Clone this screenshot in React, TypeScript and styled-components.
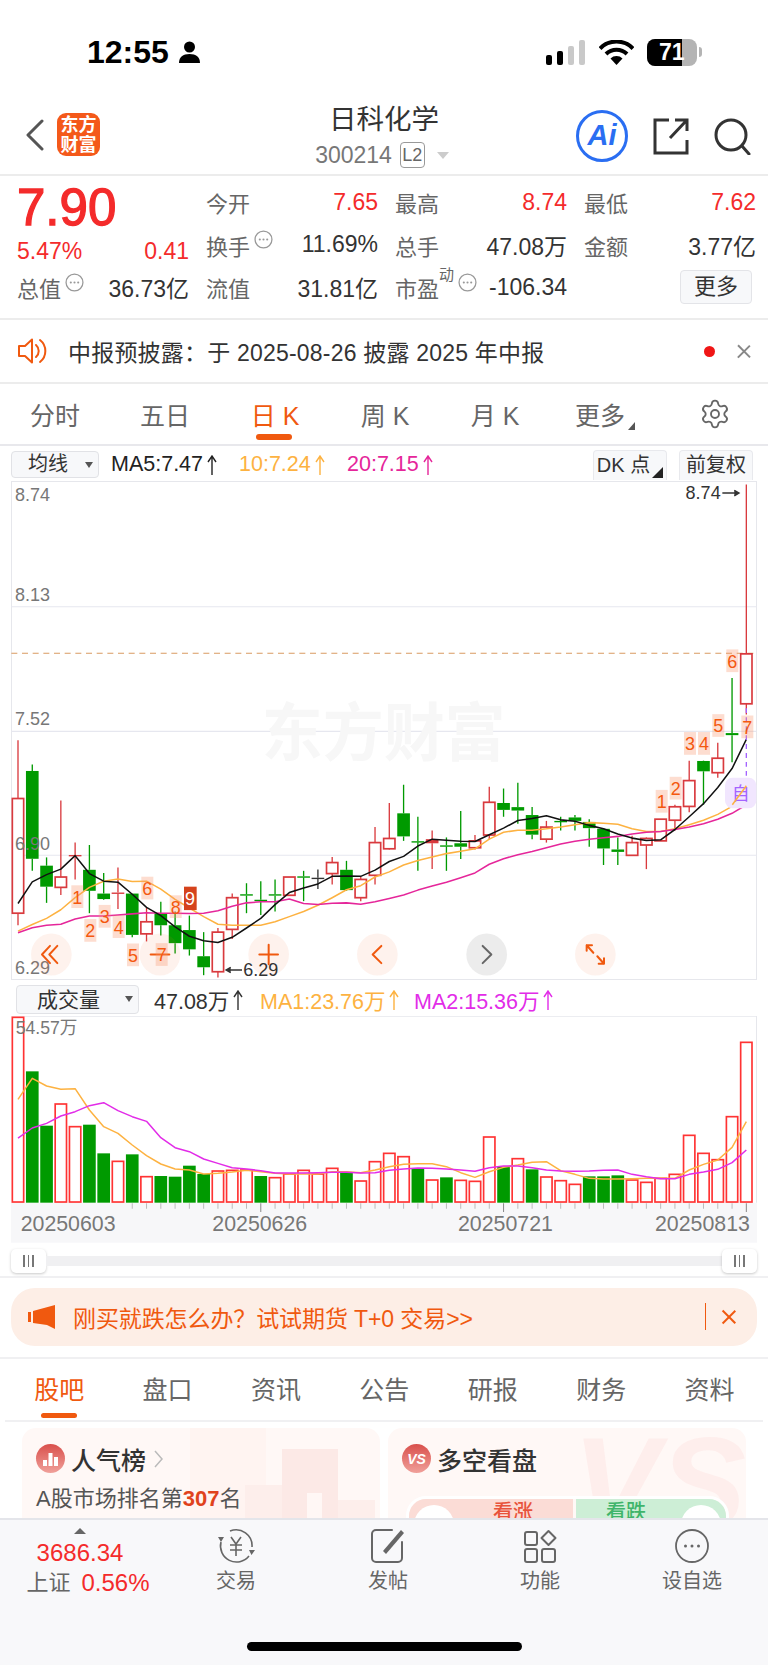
import styled, { createGlobalStyle } from "styled-components";
import { Settings } from "lucide-react";

const GlobalStyle = createGlobalStyle`
  html, body {
    margin: 0;
    padding: 0;
    background: #fff;
    font-family: "Liberation Sans", "Noto Sans CJK SC", sans-serif;
  }
  * { box-sizing: border-box; }
`;

const RED = "#f42b2b";
const ORANGE = "#f0590f";

// chart data is [colour, hi, top, bottom, lo] in chart units (3 units a pixel)
type Candle = [string, number, number, number, number];
const candles: Candle[] = [
  ["r", 843, 1012, 1345, 1380], ["g", 913, 932, 1187, 1222], ["g", 1183, 1207, 1268, 1315], ["r", 1018, 1240, 1270, 1292],
  ["r", 1140, 1176, 1180, 1247], ["g", 1147, 1219, 1280, 1345], ["g", 1228, 1288, 1304, 1306], ["r", 1212, 1285, 1288, 1333],
  ["g", 1288, 1288, 1408, 1415], ["r", 1330, 1370, 1405, 1427], ["g", 1312, 1345, 1380, 1410], ["g", 1340, 1380, 1432, 1462],
  ["g", 1352, 1394, 1450, 1468], ["g", 1400, 1470, 1502, 1525], ["r", 1388, 1400, 1515, 1532], ["r", 1288, 1300, 1392, 1420],
  ["g", 1258, 1290, 1294, 1345], ["g", 1252, 1306, 1309, 1350], ["g", 1247, 1290, 1294, 1340], ["r", 1240, 1240, 1293, 1293],
  ["g", 1222, 1238, 1241, 1310], ["k", 1218, 1242, 1245, 1275], ["r", 1182, 1198, 1230, 1262], ["g", 1193, 1219, 1278, 1280],
  ["r", 1240, 1247, 1300, 1310], ["r", 1095, 1140, 1235, 1262], ["r", 1025, 1128, 1158, 1160], ["g", 972, 1055, 1122, 1135],
  ["g", 1065, 1136, 1139, 1222], ["r", 1105, 1130, 1142, 1217], ["g", 1125, 1148, 1151, 1222], ["g", 1048, 1142, 1152, 1188],
  ["r", 1118, 1135, 1155, 1160], ["r", 978, 1023, 1118, 1130], ["g", 983, 1025, 1045, 1065], ["g", 966, 1037, 1047, 1085],
  ["g", 1037, 1060, 1117, 1130], ["r", 1077, 1095, 1130, 1140], ["g", 1065, 1077, 1080, 1105], ["g", 1060, 1067, 1077, 1105],
  ["g", 1072, 1080, 1098, 1152], ["g", 1098, 1100, 1157, 1205], ["g", 1125, 1160, 1167, 1205], ["r", 1120, 1140, 1177, 1177],
  ["r", 1125, 1128, 1147, 1217], ["r", 1072, 1072, 1135, 1135], ["r", 1030, 1036, 1075, 1105], ["r", 902, 960, 1035, 1052],
  ["g", 902, 903, 933, 1030], ["r", 850, 895, 937, 952], ["g", 662, 822, 828, 907], ["r", 100, 592, 737, 768],
];

const ma5 = [1317, 1254, 1233, 1217, 1178, 1230, 1252, 1255, 1290, 1328, 1352, 1385, 1412, 1425, 1430, 1415, 1388, 1360, 1320, 1285, 1272, 1260, 1238, 1237, 1238, 1220, 1195, 1180, 1150, 1130, 1133, 1136, 1137, 1117, 1098, 1076, 1070, 1062, 1074, 1078, 1090, 1100, 1115, 1127, 1134, 1132, 1102, 1065, 1027, 980, 925, 840];
const ma10 = [1397, 1378, 1360, 1335, 1300, 1270, 1252, 1246, 1253, 1252, 1275, 1305, 1330, 1355, 1377, 1380, 1380, 1380, 1370, 1355, 1340, 1322, 1300, 1277, 1265, 1240, 1225, 1205, 1192, 1182, 1172, 1165, 1158, 1130, 1110, 1104, 1104, 1100, 1095, 1088, 1082, 1084, 1087, 1100, 1108, 1108, 1100, 1088, 1075, 1058, 1035, 975];
const ma20 = [1402, 1387, 1380, 1377, 1362, 1353, 1353, 1350, 1347, 1344, 1345, 1345, 1346, 1345, 1338, 1325, 1315, 1312, 1312, 1304, 1317, 1320, 1316, 1315, 1319, 1312, 1302, 1292, 1278, 1266, 1255, 1242, 1228, 1203, 1187, 1175, 1166, 1155, 1144, 1136, 1130, 1126, 1122, 1115, 1110, 1108, 1102, 1095, 1085, 1072, 1055, 1030];

const volTops = [82, 244, 407, 342, 410, 404, 490, 514, 493, 560, 558, 560, 527, 552, 543, 541, 540, 558, 563, 552, 541, 552, 535, 548, 573, 515, 490, 500, 535, 570, 562, 571, 574, 441, 530, 506, 538, 561, 572, 583, 559, 559, 556, 570, 577, 565, 553, 436, 490, 509, 380, 157];
const volGreen = [1, 2, 5, 6, 8, 10, 11, 12, 13, 17, 23, 28, 30, 34, 36, 40, 41, 42];
const volMa1 = [328, 265, 288, 298, 296, 360, 410, 430, 465, 497, 522, 537, 540, 552, 550, 546, 541, 545, 550, 552, 552, 552, 545, 545, 548, 540, 530, 523, 521, 521, 530, 548, 562, 545, 532, 525, 517, 515, 542, 553, 565, 567, 567, 566, 565, 565, 565, 540, 523, 510, 472, 395];
const volMa2 = [444, 414, 400, 378, 365, 347, 338, 362, 380, 394, 443, 473, 485, 507, 520, 533, 537, 542, 549, 549, 549, 548, 547, 547, 549, 548, 541, 537, 534, 535, 537, 540, 544, 533, 528, 528, 533, 540, 543, 544, 543, 541, 540, 553, 560, 566, 566, 553, 546, 538, 518, 480];

const xAt = (i: number) => 54 + (i * (2239 - 54)) / 51;
const points = (ys: number[]) => ys.map((y, i) => `${xAt(i).toFixed(1)},${y}`).join(" ");

const candleColor: Record<string, string> = { r: "#d93a3e", g: "#009a00", k: "#333333" };

const tdMarks: [string, number, number][] = [
  ["1", 232, 1297], ["2", 271, 1395], ["3", 314, 1354], ["4", 356, 1384], ["5", 399, 1466], ["6", 442, 1272], ["7", 485, 1465], ["8", 527, 1326],
  ["1", 1985, 1020], ["2", 2027, 982], ["3", 2070, 852], ["4", 2112, 852], ["5", 2155, 800], ["6", 2197, 612], ["7", 2242, 804],
];

function KLineChart() {
  return (
    <ChartSvg viewBox="33 90 2238 1449" preserveAspectRatio="none" $height={499}>
      <rect x="34.500" y="91.500" width="2235" height="1446" fill="#fff" stroke="#e6e7ec" strokeWidth="3" />
      {[455, 817, 1177].map((y) => (
        <line key={y} x1="34" x2="2270" y1={y} y2={y} stroke="#e6e7ef" strokeWidth="3" />
      ))}
      <line x1="34" x2="2268" y1="590" y2="590" stroke="#d99a62" strokeWidth="3" strokeDasharray="18 14" />
      <SvgLabel x="785" y="885" $size={183} $color="#f7f7f7" $bold>东方财富</SvgLabel>

      {candles.map(([c, hi, top, bottom, lo], i) => {
        const x = xAt(i);
        const color = candleColor[c];
        const doji = bottom - top < 15;
        return (
          <g key={i}>
            <line x1={x} x2={x} y1={hi} y2={top} stroke={color} strokeWidth="4" />
            <line x1={x} x2={x} y1={bottom} y2={lo} stroke={color} strokeWidth="4" />
            {c === "r" && !doji ? (
              <rect x={x - 17} y={top} width="34" height={bottom - top} fill="#fff" stroke={color} strokeWidth="5" />
            ) : (
              <rect x={x - 19} y={top} width="38" height={Math.max(bottom - top, 4)} fill={color} />
            )}
          </g>
        );
      })}

      <polyline points={points(ma10)} fill="none" stroke="#fdb241" strokeWidth="4.500" strokeLinejoin="round" />
      <polyline points={points(ma20)} fill="none" stroke="#e5269a" strokeWidth="4.500" strokeLinejoin="round" />
      <polyline points={points(ma5)} fill="none" stroke="#111" strokeWidth="4.500" strokeLinejoin="round" />

      {[["8.74", 148], ["8.13", 438], ["7.52", 800], ["6.90", 1163], ["6.29", 1523]].map(([t, y]) => (
        <SvgLabel key={t} x="45" y={y} $size={54} $color="#777">{t}</SvgLabel>
      ))}

      <line x1="2239" x2="2239" y1="750" y2="950" stroke="#a463ff" strokeWidth="4" strokeDasharray="14 12" />

      <circle cx="154" cy="1465" r="61" fill="rgba(245,110,50,0.09)" />
      <circle cx="480" cy="1465" r="61" fill="rgba(245,110,50,0.09)" />
      <circle cx="806" cy="1465" r="61" fill="rgba(245,110,50,0.09)" />
      <circle cx="1132" cy="1465" r="61" fill="rgba(245,110,50,0.09)" />
      <circle cx="1460" cy="1465" r="61" fill="#ececec" />
      <circle cx="1786" cy="1465" r="61" fill="rgba(245,110,50,0.09)" />

      <g fill="none" stroke={ORANGE} strokeWidth="6" strokeLinecap="round" strokeLinejoin="round">
        <path d="M150 1440 L126 1465 L150 1490 M172 1440 L148 1465 L172 1490" />
        <line x1="452" x2="508" y1="1465" y2="1465" />
        <path d="M778 1465 H834 M806 1437 V1493" />
        <path d="M1144 1440 L1118 1465 L1144 1490" />
        <path d="M1760 1438 L1780 1460 M1760 1438 H1776 M1760 1438 V1454 M1812 1492 L1792 1470 M1812 1492 H1796 M1812 1492 V1476" />
      </g>
      <path d="M1448 1440 L1474 1465 L1448 1490" fill="none" stroke="#666" strokeWidth="6" strokeLinecap="round" strokeLinejoin="round" />

      {tdMarks.map(([n, x, y], i) => (
        <g key={i}>
          <rect x={x - 18} y={y - 33} width="36" height="66" fill="rgba(250,150,110,0.32)" />
          <SvgLabel x={x} y={y + 20} $size={54} $color="#f4580f" $center>{n}</SvgLabel>
        </g>
      ))}
      <rect x="552" y="1268" width="38" height="68" fill="#d5431c" />
      <SvgLabel x="570" y="1322" $size={54} $color="#fff" $center>9</SvgLabel>

      <rect x="2175" y="952" width="94" height="88" rx="22" fill="#f1e6fe" />
      <SvgLabel x="2222" y="1015" $size={54} $color="#a463ff" $center>自</SvgLabel>
      <polyline points="2197,1030 2239,975" fill="none" stroke="#fdb241" strokeWidth="4.500" />

      <SvgLabel x="2162" y="143" $size={54} $color="#333" $end>8.74</SvgLabel>
      <path d="M2167 125 H2215 M2203 117 L2217 125 L2203 133" fill="#333" stroke="#333" strokeWidth="4" />
      <path d="M680 1510 H726 M692 1502 L678 1510 L692 1518" fill="#333" stroke="#333" strokeWidth="4" />
      <SvgLabel x="730" y="1528" $size={54} $color="#333">6.29</SvgLabel>
    </ChartSvg>
  );
}

function VolumeChart() {
  return (
    <ChartSvg viewBox="33 78 2238 680" preserveAspectRatio="none" $height={226.7}>
      <rect x="33" y="78" width="2238" height="560" fill="#fff" />
      <rect x="33" y="638" width="2238" height="120" fill="#f7f7f9" />
      <line x1="34" x2="2270" y1="79" y2="79" stroke="#e6e7ec" strokeWidth="3" />
      <line x1="2269.500" x2="2269.500" y1="78" y2="638" stroke="#e6e7ec" strokeWidth="3" />
      {volTops.map((top, i) => {
        const x = xAt(i);
        const major = i === 17 || i === 34 || i === 51;
        return (
          <g key={i}>
            {volGreen.includes(i) ? (
              <rect x={x - 19} y={top} width="38" height={638 - top} fill="#009a00" />
            ) : (
              <rect x={x - 17} y={top} width="34" height={636 - top} fill="#fff" stroke="#ff3333" strokeWidth="5" />
            )}
            {i > 7 && <line x1={x} x2={x} y1="640" y2={major ? 666 : 656} stroke={major ? "#888" : "#bbb"} strokeWidth="3" />}
          </g>
        );
      })}
      <polyline points={points(volMa1)} fill="none" stroke="#fdb241" strokeWidth="4.500" strokeLinejoin="round" />
      <polyline points={points(volMa2)} fill="none" stroke="#e22ce8" strokeWidth="4.500" strokeLinejoin="round" />
      <SvgLabel x="47" y="131" $size={53} $color="#777">54.57万</SvgLabel>
      {[["20250603", 62], ["20250626", 637], ["20250721", 1374], ["20250813", 1965]].map(([t, x]) => (
        <SvgLabel key={t} x={x} y="724" $size={64} $color="#777">{t}</SvgLabel>
      ))}
    </ChartSvg>
  );
}

const InfoDot = () => (
  <InfoSvg viewBox="0 0 18 18">
    <circle cx="9" cy="9" r="8" fill="none" stroke="#999" strokeWidth="1.200" />
    <circle cx="5.500" cy="9" r="1" fill="#999" />
    <circle cx="9" cy="9" r="1" fill="#999" />
    <circle cx="12.500" cy="9" r="1" fill="#999" />
  </InfoSvg>
);

const UpMark = () => (
  <UpSvg viewBox="0 0 10 20">
    <path d="M5 20 V2 M1 7 L5 1 L9 7" fill="none" stroke="currentColor" strokeWidth="1.400" />
  </UpSvg>
);

const GripBars = () => (
  <Handle>
    <i />
    <i />
    <i />
  </Handle>
);

export default function App() {
  return (
    <Page>
      <GlobalStyle />

      <StatusBar>
        <Time>12:55</Time>
        <svg width="21" height="22" viewBox="0 0 21 22" style={{ marginLeft: 9 }}>
          <circle cx="10.500" cy="6" r="5.500" fill="#000" />
          <path d="M0 22c0-6 4-9 10.500-9S21 16 21 22z" fill="#000" />
        </svg>
        <StatusRight>
          <svg width="39" height="25" viewBox="0 0 39 25">
            <rect x="0" y="15" width="6" height="10" rx="2" fill="#000" />
            <rect x="11" y="11" width="6" height="14" rx="2" fill="#000" />
            <rect x="22" y="6" width="6" height="19" rx="2" fill="#c9c9c9" />
            <rect x="33" y="0" width="6" height="25" rx="2" fill="#c9c9c9" />
          </svg>
          <svg width="35" height="25" viewBox="0 0 35 25" style={{ marginLeft: 14 }}>
            <path d="M1 8.500a23 23 0 0 1 33 0" fill="none" stroke="#000" strokeWidth="4" />
            <path d="M7 14a15 15 0 0 1 21 0" fill="none" stroke="#000" strokeWidth="4" />
            <path d="M17.500 25l-6-6.500a8.500 8.500 0 0 1 12 0z" fill="#000" />
          </svg>
          <Battery>
            <BatteryFill>71</BatteryFill>
          </Battery>
          <BatteryTip />
        </StatusRight>
      </StatusBar>

      <Header>
        <HeaderLeft>
          <svg width="20" height="32" viewBox="0 0 20 32">
            <path d="M17 2 L3 16 L17 30" fill="none" stroke="#555" strokeWidth="3" strokeLinecap="round" strokeLinejoin="round" />
          </svg>
          <Logo>
            东方
            <br />
            财富
          </Logo>
        </HeaderLeft>
        <HeaderCenter>
          <Title>日科化学</Title>
          <CodeRow>
            300214
            <LevelBadge>L2</LevelBadge>
            <DownArrow />
          </CodeRow>
        </HeaderCenter>
        <HeaderRight>
          <AiBadge>Ai</AiBadge>
          <svg width="36" height="37" viewBox="0 0 36 37" style={{ marginLeft: 25 }}>
            <path d="M16 2 H2 V35 H34 V22 M17 20 L33 3 M22 2 H34 V13" fill="none" stroke="#333" strokeWidth="3" />
          </svg>
          <svg width="37" height="37" viewBox="0 0 37 37" style={{ marginLeft: 25 }}>
            <circle cx="17" cy="17" r="15" fill="none" stroke="#333" strokeWidth="3" />
            <path d="M28 28 L35 36" stroke="#333" strokeWidth="3" strokeLinecap="round" />
          </svg>
        </HeaderRight>
      </Header>

      <Quote>
        <Price>7.90</Price>
        <Cell><Label>今开</Label><Value $red>7.65</Value></Cell>
        <Cell><Label>最高</Label><Value $red>8.74</Value></Cell>
        <Cell><Label>最低</Label><Value $red>7.62</Value></Cell>

        <ChangeCell><Value $red>5.47%</Value><Value $red>0.41</Value></ChangeCell>
        <Cell><Label>换手<InfoDot /></Label><Value>11.69%</Value></Cell>
        <Cell><Label>总手</Label><Value>47.08万</Value></Cell>
        <Cell><Label>金额</Label><Value>3.77亿</Value></Cell>

        <Cell><Label>总值<InfoDot /></Label><Value>36.73亿</Value></Cell>
        <Cell><Label>流值</Label><Value>31.81亿</Value></Cell>
        <Cell><Label>市盈<Sup>动</Sup><InfoDot /></Label><Value>-106.34</Value></Cell>
        <MoreCell><MoreButton>更多</MoreButton></MoreCell>
      </Quote>

      <Notice>
        <svg width="30" height="26" viewBox="0 0 30 26">
          <path d="M1 8 H7 L14 1.500 V24.500 L7 18 H1 Z" fill="none" stroke={ORANGE} strokeWidth="2" strokeLinejoin="round" />
          <path d="M18 7 A8 8 0 0 1 18 19 M22 2 A14 14 0 0 1 22 24" fill="none" stroke={ORANGE} strokeWidth="2" strokeLinecap="round" />
        </svg>
        <NoticeText>中报预披露：于 2025-08-26 披露 2025 年中报</NoticeText>
        <RedDot />
        <CloseMark $color="#888" $size={14} />
      </Notice>

      <PeriodTabs>
        <PeriodTab>分时</PeriodTab>
        <PeriodTab>五日</PeriodTab>
        <PeriodTab $active>日 K</PeriodTab>
        <PeriodTab>周 K</PeriodTab>
        <PeriodTab>月 K</PeriodTab>
        <PeriodTab>更多<CornerArrow /></PeriodTab>
        <PeriodTab><Settings size={32} strokeWidth={1.400} color="#666" /></PeriodTab>
      </PeriodTabs>

      <ChartBar>
        <SelectBox>均线<SelectArrow /></SelectBox>
        <MaText $color="#222" $left={12} $width={128}>MA5:7.47<UpMark /></MaText>
        <MaText $color="#fdb241" $width={108}>10:7.24<UpMark /></MaText>
        <MaText $color="#e5269a" $width={90}>20:7.15<UpMark /></MaText>
        <RightTools>
          <ToolButton>DK 点<CornerArrow $dark /></ToolButton>
          <ToolButton>前复权</ToolButton>
        </RightTools>
      </ChartBar>
      <ChartWrap>
        <KLineChart />
      </ChartWrap>

      <VolumeBar>
        <SelectBox $wide>成交量<SelectArrow /></SelectBox>
        <MaText $color="#333" $left={15} $width={106}>47.08万<UpMark /></MaText>
        <MaText $color="#fdb241" $width={154}>MA1:23.76万<UpMark /></MaText>
        <MaText $color="#e22ce8" $width={150}>MA2:15.36万<UpMark /></MaText>
      </VolumeBar>
      <ChartWrap>
        <VolumeChart />
      </ChartWrap>

      <Slider>
        <GripBars />
        <SliderTrack />
        <GripBars />
      </Slider>

      <BannerWrap>
        <Banner>
          <svg width="28" height="24" viewBox="0 0 28 24">
            <rect x="0" y="7" width="3" height="10" fill={ORANGE} />
            <path d="M5 6 L27 0 V24 L19 20 L5 18 Z" fill={ORANGE} />
          </svg>
          <BannerText>刚买就跌怎么办？试试期货 T+0 交易&gt;&gt;</BannerText>
          <BannerDivider />
          <CloseMark $color={ORANGE} $size={15} />
        </Banner>
      </BannerWrap>

      <InfoTabs>
        <InfoTab $active>股吧</InfoTab>
        <InfoTab>盘口</InfoTab>
        <InfoTab>资讯</InfoTab>
        <InfoTab>公告</InfoTab>
        <InfoTab>研报</InfoTab>
        <InfoTab>财务</InfoTab>
        <InfoTab>资料</InfoTab>
      </InfoTabs>

      <Cards>
        <Card>
          <CardArt viewBox="0 0 358 110" aria-hidden="true">
            <rect x="168" y="0" width="76" height="110" fill="#fff1ee" opacity="0.6" />
            <rect x="223" y="57" width="37" height="53" fill="#fdeeeb" />
            <rect x="260" y="21" width="56" height="89" fill="#fce9e6" />
            <rect x="316" y="72" width="37" height="38" fill="#fdeeeb" />
            <rect x="285" y="65" width="15" height="45" fill="#fff7f5" />
          </CardArt>
          <CardHead>
            <CardIcon>
              <svg width="17" height="15" viewBox="0 0 17 15">
                <path d="M1 15V9h4v6zM6.500 15V2h4v13zM12 15V6h4v9z" fill="#fff" />
              </svg>
            </CardIcon>
            <CardTitle>人气榜</CardTitle>
            <svg width="9" height="18" viewBox="0 0 9 18" style={{ marginLeft: 8 }}>
              <path d="M1 1 L8 9 L1 17" fill="none" stroke="#bbb" strokeWidth="1.500" />
            </svg>
          </CardHead>
          <CardLine>A股市场排名第<strong>307</strong>名</CardLine>
        </Card>
        <Card>
          <CardWatermark aria-hidden="true">VS</CardWatermark>
          <CardHead>
            <CardIcon>VS</CardIcon>
            <CardTitle>多空看盘</CardTitle>
          </CardHead>
          <VotePill>
            <VoteUp>看涨</VoteUp>
            <VoteDown>看跌</VoteDown>
          </VotePill>
        </Card>
      </Cards>

      <BottomBar>
        <IndexBlock>
          <UpTriangle />
          <IndexValue>3686.34</IndexValue>
          <IndexRow>
            <span>上证</span>
            <IndexChange>0.56%</IndexChange>
          </IndexRow>
        </IndexBlock>
        <NavItem>
          <svg width="38" height="36" viewBox="0 0 38 36" fill="none" stroke="#666" strokeWidth="1.600">
            <path d="M13 3 A16 16 0 0 1 35 19" />
            <path d="M32 28 A16 16 0 0 1 4 14" />
            <path d="M1 9 L7 9 L4 14 Z M32 22 L38 22 L34.500 27 Z" fill="#666" stroke="none" />
            <path d="M14 9 L19 16 L24 9 M13 17 H25 M13 22 H25 M19 16 V28" />
          </svg>
          <NavLabel>交易</NavLabel>
        </NavItem>
        <NavItem>
          <svg width="36" height="36" viewBox="0 0 36 36" fill="none" stroke="#666" strokeWidth="2">
            <path d="M22 2 H6 a4 4 0 0 0-4 4 V30 a4 4 0 0 0 4 4 H28 a4 4 0 0 0 4-4 V14" strokeLinecap="round" />
            <path d="M13 23 L31 2 L34 5 L16 26 Z" fill="#666" stroke="none" />
          </svg>
          <NavLabel>发帖</NavLabel>
        </NavItem>
        <NavItem>
          <svg width="36" height="36" viewBox="0 0 36 36" fill="none" stroke="#666" strokeWidth="2">
            <rect x="3" y="4" width="12" height="13" rx="2" />
            <rect x="3" y="21" width="12" height="13" rx="2" />
            <rect x="20" y="21" width="13" height="13" rx="2" />
            <path d="M26.500 3 L33.500 10 L26.500 17 L19.500 10 Z" strokeLinejoin="round" />
          </svg>
          <NavLabel>功能</NavLabel>
        </NavItem>
        <NavItem>
          <svg width="36" height="36" viewBox="0 0 36 36">
            <circle cx="18" cy="18" r="16" fill="none" stroke="#666" strokeWidth="1.800" />
            <circle cx="11.500" cy="18" r="1.500" fill="#666" />
            <circle cx="18" cy="18" r="1.500" fill="#666" />
            <circle cx="24.500" cy="18" r="1.500" fill="#666" />
          </svg>
          <NavLabel>设自选</NavLabel>
        </NavItem>
        <HomeIndicator />
      </BottomBar>
    </Page>
  );
}

const Page = styled.div`
  position: relative;
  width: 768px;
  height: 1665px;
  overflow: hidden;
  background: #fff;
  color: #333;
`;

const StatusBar = styled.div`
  height: 96px;
  padding: 36px 0 28px 87px;
  display: flex;
  align-items: center;
`;

const Time = styled.div`
  font-size: 32px;
  line-height: 32px;
  font-weight: 700;
  color: #000;
  width: 83px;
`;

const StatusRight = styled.div`
  margin-left: 346px;
  display: flex;
  align-items: center;
`;

const Battery = styled.div`
  margin-left: 13px;
  width: 50px;
  height: 27px;
  border-radius: 8px;
  background: #b4b4b4;
  overflow: hidden;
`;

const BatteryFill = styled.div`
  width: 35px;
  height: 27px;
  background: #000;
  color: #fff;
  font-size: 23px;
  line-height: 27px;
  font-weight: 700;
  padding-left: 12px;
  white-space: nowrap;
`;

const BatteryTip = styled.div`
  margin-left: 2px;
  width: 3px;
  height: 10px;
  border-radius: 0 3px 3px 0;
  background: #b4b4b4;
`;

const Header = styled.div`
  position: relative;
  height: 80px;
  border-bottom: 2px solid #ececec;
  display: flex;
  align-items: flex-start;
  justify-content: center;
`;

const HeaderLeft = styled.div`
  position: absolute;
  left: 25px;
  top: 17px;
  display: flex;
  align-items: center;
`;

const Logo = styled.div`
  margin-left: 12px;
  width: 43px;
  height: 43px;
  border-radius: 9px;
  background: #f4591a;
  color: #fff;
  font-size: 18px;
  line-height: 20px;
  font-weight: 700;
  text-align: center;
  padding-top: 2px;
`;

const HeaderCenter = styled.div`
  display: flex;
  flex-direction: column;
  align-items: center;
  padding-top: 8px;
`;

const Title = styled.div`
  font-size: 27.500px;
  line-height: 32px;
  color: #333;
`;

const CodeRow = styled.div`
  margin: 6px 0 0 -4px;
  display: flex;
  align-items: center;
  font-size: 23px;
  line-height: 26px;
  color: #777;
`;

const LevelBadge = styled.span`
  margin-left: 8px;
  width: 25px;
  height: 26px;
  border: 1px solid #999;
  border-radius: 4px;
  font-size: 18px;
  line-height: 24px;
  text-align: center;
  color: #666;
`;

const DownArrow = styled.span`
  margin-left: 12px;
  width: 0;
  height: 0;
  border-left: 6px solid transparent;
  border-right: 6px solid transparent;
  border-top: 7px solid #ccc;
`;

const HeaderRight = styled.div`
  position: absolute;
  left: 576px;
  top: 14px;
  display: flex;
  align-items: center;
`;

const AiBadge = styled.div`
  width: 52px;
  height: 52px;
  border-radius: 50%;
  border: 3px solid #2a6ef2;
  color: #2a6ef2;
  font-size: 29px;
  line-height: 45px;
  font-weight: 700;
  font-style: italic;
  text-align: center;
`;

const Quote = styled.div`
  height: 144px;
  padding: 5px 12px 0 17px;
  border-bottom: 2px solid #ececec;
  display: grid;
  grid-template-columns: repeat(4, 172px);
  grid-auto-rows: 42.500px;
  column-gap: 17px;
`;

const Price = styled.div`
  padding-top: 2px;
  font-size: 51px;
  line-height: 50px;
  font-weight: 400;
  -webkit-text-stroke: 1.300px ${RED};
  color: ${RED};
`;

const Cell = styled.div`
  display: flex;
  align-items: center;
  justify-content: space-between;
  white-space: nowrap;
`;

const ChangeCell = styled(Cell)`
  padding-top: 14px;
`;

const MoreCell = styled(Cell)`
  justify-content: flex-end;
  padding-right: 4px;
`;

const Label = styled.span`
  display: flex;
  align-items: center;
  font-size: 22px;
  color: #666;
`;

const Sup = styled.span`
  font-size: 15px;
  align-self: flex-start;
  margin-top: -8px;
`;

const InfoSvg = styled.svg`
  width: 19px;
  height: 19px;
  margin: -10px 0 0 4px;
`;

const Value = styled.span<{ $red?: boolean }>`
  font-size: 23px;
  color: ${(p) => (p.$red ? RED : "#333")};
`;

const MoreButton = styled.div`
  width: 72px;
  height: 34px;
  background: #f7f8fa;
  border: 1px solid #e3e4e8;
  border-radius: 4px;
  text-align: center;
  font-size: 22px;
  line-height: 31px;
  color: #333;
`;

const Notice = styled.div`
  height: 64px;
  padding: 0 18px 0 18px;
  border-bottom: 2px solid #ececec;
  display: flex;
  align-items: center;
`;

const NoticeText = styled.div`
  margin-left: 20px;
  font-size: 23px;
  letter-spacing: 0.200px;
  color: #333;
  flex: 1;
  white-space: nowrap;
`;

const RedDot = styled.span`
  width: 11px;
  height: 11px;
  border-radius: 50%;
  background: #f01616;
  margin-right: 21px;
`;

const CloseMark = styled.span<{ $color: string; $size: number }>`
  position: relative;
  width: ${(p) => p.$size}px;
  height: ${(p) => p.$size}px;
  &::before,
  &::after {
    content: "";
    position: absolute;
    left: 50%;
    top: -10%;
    width: 1.600px;
    height: 120%;
    background: ${(p) => p.$color};
  }
  &::before {
    transform: rotate(45deg);
  }
  &::after {
    transform: rotate(-45deg);
  }
`;

const PeriodTabs = styled.div`
  height: 62px;
  border-bottom: 2px solid #e8e8ec;
  display: grid;
  grid-template-columns: repeat(7, 110px);
`;

const PeriodTab = styled.div<{ $active?: boolean }>`
  position: relative;
  display: flex;
  justify-content: center;
  align-items: center;
  padding-bottom: 1px;
  font-size: 25px;
  color: ${(p) => (p.$active ? ORANGE : "#666")};
  ${(p) =>
    p.$active &&
    `&::after {
      content: "";
      position: absolute;
      left: 36px;
      bottom: 4px;
      width: 36px;
      height: 6px;
      border-radius: 3px;
      background: ${ORANGE};
    }`}
`;

const CornerArrow = styled.span<{ $dark?: boolean }>`
  align-self: flex-end;
  margin: 0 0 ${(p) => (p.$dark ? "2px" : "13px")} ${(p) => (p.$dark ? "2px" : "3px")};
  width: 0;
  height: 0;
  border-left: ${(p) => (p.$dark ? "11px" : "7px")} solid transparent;
  border-bottom: ${(p) => (p.$dark ? "11px" : "8px")} solid ${(p) => (p.$dark ? "#222" : "#555")};
`;

const ChartBar = styled.div`
  height: 35px;
  padding: 5px 15px 3px 11px;
  display: flex;
  align-items: center;
`;

const VolumeBar = styled.div`
  height: 36px;
  padding: 5px 0 2px 16px;
  display: flex;
  align-items: center;
`;

const SelectBox = styled.div<{ $wide?: boolean }>`
  position: relative;
  width: ${(p) => (p.$wide ? 123 : 88)}px;
  height: ${(p) => (p.$wide ? 29 : 27)}px;
  background: #f7f8fa;
  border: 1px solid #e1e2e6;
  border-radius: 4px;
  padding-left: ${(p) => (p.$wide ? 20 : 16)}px;
  font-size: ${(p) => (p.$wide ? 21 : 20)}px;
  line-height: ${(p) => (p.$wide ? 27 : 25)}px;
  color: #333;
`;

const SelectArrow = styled.span`
  position: absolute;
  right: 5px;
  top: 10px;
  width: 0;
  height: 0;
  border-left: 4px solid transparent;
  border-right: 4px solid transparent;
  border-top: 6px solid #555;
`;

const MaText = styled.span<{ $color: string; $left?: number; $width: number }>`
  display: flex;
  align-items: center;
  margin-left: ${(p) => p.$left ?? 0}px;
  width: ${(p) => p.$width}px;
  font-size: 21.500px;
  color: ${(p) => p.$color};
  white-space: nowrap;
`;

const UpSvg = styled.svg`
  width: 10px;
  height: 20px;
  margin-left: 4px;
`;

const RightTools = styled.div`
  margin-left: auto;
  display: flex;
  gap: 12px;
`;

const ToolButton = styled.div`
  display: flex;
  justify-content: center;
  width: 74px;
  height: 30px;
  background: #f7f8fa;
  border: 1px solid #e8e9ed;
  border-bottom: none;
  border-radius: 4px 4px 0 0;
  font-size: 20px;
  line-height: 29px;
  color: #333;
  white-space: nowrap;
`;

const ChartWrap = styled.div`
  padding-left: 11px;
`;

const ChartSvg = styled.svg<{ $height: number }>`
  display: block;
  width: 746px;
  height: ${(p) => p.$height}px;
`;

const SvgLabel = styled.text<{ $size: number; $color: string; $bold?: boolean; $center?: boolean; $end?: boolean }>`
  font-size: ${(p) => p.$size}px;
  fill: ${(p) => p.$color};
  font-weight: ${(p) => (p.$bold ? 700 : 400)};
  text-anchor: ${(p) => (p.$center ? "middle" : p.$end ? "end" : "start")};
`;

const Slider = styled.div`
  height: 35px;
  padding: 6px 11px 0;
  border-bottom: 2px solid #f0f0f2;
  display: flex;
  align-items: flex-start;
`;

const Handle = styled.div`
  width: 35px;
  height: 24px;
  border-radius: 5px;
  background: #fff;
  box-shadow: 0 1px 3px rgba(0, 0, 0, 0.22);
  display: flex;
  justify-content: center;
  align-items: center;
  gap: 3px;
  i {
    width: 1.500px;
    height: 12px;
    background: #777;
  }
`;

const SliderTrack = styled.div`
  flex: 1;
  height: 10px;
  margin-top: 7px;
  background: #f0f0f2;
`;

const BannerWrap = styled.div`
  height: 81px;
  padding: 10px 11px 0;
  border-bottom: 2px solid #f0f0f2;
`;

const Banner = styled.div`
  height: 58px;
  border-radius: 24px;
  background: #fdeee6;
  padding: 0 22px 0 17px;
  display: flex;
  align-items: center;
`;

const BannerText = styled.div`
  margin-left: 17px;
  flex: 1;
  font-size: 23px;
  letter-spacing: -0.100px;
  color: ${ORANGE};
  white-space: nowrap;
`;

const BannerDivider = styled.span`
  width: 1.500px;
  height: 27px;
  background: ${ORANGE};
  margin-right: 14px;
`;

const InfoTabs = styled.div`
  height: 63px;
  margin: 0 5px;
  border-bottom: 2px solid #f0f0f2;
  display: grid;
  grid-template-columns: repeat(7, 108.400px);
`;

const InfoTab = styled.div<{ $active?: boolean }>`
  position: relative;
  display: flex;
  justify-content: center;
  align-items: center;
  padding-bottom: 3px;
  font-size: 25px;
  color: ${(p) => (p.$active ? ORANGE : "#666")};
  ${(p) =>
    p.$active &&
    `&::after {
      content: "";
      position: absolute;
      left: 36px;
      bottom: 2px;
      width: 36px;
      height: 5px;
      border-radius: 3px;
      background: ${ORANGE};
    }`}
`;

const Cards = styled.div`
  height: 96px;
  padding: 6px 22px 0;
  display: grid;
  grid-template-columns: 358px 358px;
  column-gap: 8px;
  overflow: hidden;
`;

const Card = styled.div`
  position: relative;
  height: 110px;
  border-radius: 14px;
  padding: 16px 14px 0;
  overflow: hidden;
  background: #fff8f6;
`;

const CardArt = styled.svg`
  position: absolute;
  left: 0;
  top: 0;
  width: 358px;
  height: 110px;
`;

const CardWatermark = styled.div`
  position: absolute;
  right: 0;
  top: -10px;
  font-size: 130px;
  line-height: 130px;
  font-weight: 700;
  font-style: italic;
  color: rgba(240, 120, 110, 0.07);
`;

const CardHead = styled.div`
  position: relative;
  display: flex;
  align-items: center;
  height: 30px;
`;

const CardIcon = styled.div`
  width: 29px;
  height: 29px;
  border-radius: 50%;
  background: linear-gradient(180deg, #d9504c, #f0a09a);
  color: #fff;
  font-size: 14px;
  font-weight: 700;
  font-style: italic;
  display: flex;
  align-items: center;
  justify-content: center;
`;

const CardTitle = styled.div`
  margin-left: 6px;
  font-size: 25px;
  font-weight: 500;
  color: #333;
`;

const CardLine = styled.div`
  position: relative;
  margin-top: 11px;
  font-size: 22px;
  line-height: 28px;
  color: #555;
  white-space: nowrap;
  strong {
    font-weight: 700;
    color: #e0421c;
  }
`;

const VotePill = styled.div`
  position: relative;
  margin: 22px 0 0 4px;
  width: 323px;
  height: 40px;
  border-radius: 20px 20px 0 0;
  border: 3px solid #fff;
  display: flex;
  overflow: hidden;
  font-size: 20px;
  font-weight: 500;
`;

const VoteUp = styled.div`
  position: relative;
  width: 164px;
  background: #fbdcd6;
  color: #e8533b;
  text-align: center;
  padding: 0 0 0 44px;
  line-height: 26px;
  &::before {
    content: "";
    position: absolute;
    left: 5px;
    top: 6px;
    width: 40px;
    height: 40px;
    border-radius: 50%;
    background: #fff;
  }
`;

const VoteDown = styled.div`
  position: relative;
  flex: 1;
  margin-left: 3px;
  background: #cdeed6;
  color: #3fb46a;
  text-align: center;
  padding: 0 50px 0 0;
  line-height: 26px;
  &::before {
    content: "";
    position: absolute;
    right: 5px;
    top: 6px;
    width: 40px;
    height: 40px;
    border-radius: 50%;
    background: #fff;
  }
`;

const BottomBar = styled.div`
  position: relative;
  height: 148px;
  background: #f8f8fa;
  border-top: 2px solid #e4e5ea;
  display: grid;
  grid-template-columns: 160px repeat(4, 152px);
  padding-top: 8px;
`;

const IndexBlock = styled.div`
  display: flex;
  flex-direction: column;
  align-items: center;
  white-space: nowrap;
`;

const UpTriangle = styled.span`
  margin-bottom: 4px;
  width: 0;
  height: 0;
  border-left: 6px solid transparent;
  border-right: 6px solid transparent;
  border-bottom: 6px solid #666;
`;

const IndexValue = styled.div`
  font-size: 24px;
  line-height: 30px;
  color: ${RED};
`;

const IndexRow = styled.div`
  display: flex;
  align-items: center;
  gap: 11px;
  font-size: 22px;
  line-height: 30px;
  color: #666;
  padding-left: 16px;
`;

const IndexChange = styled.span`
  font-size: 24px;
  color: ${RED};
`;

const NavItem = styled.div`
  display: flex;
  flex-direction: column;
  align-items: center;
`;

const NavLabel = styled.div`
  margin-top: 3px;
  font-size: 20px;
  line-height: 28px;
  color: #666;
`;

const HomeIndicator = styled.div`
  position: absolute;
  left: 247px;
  bottom: 15px;
  width: 275px;
  height: 9px;
  border-radius: 5px;
  background: #000;
`;
